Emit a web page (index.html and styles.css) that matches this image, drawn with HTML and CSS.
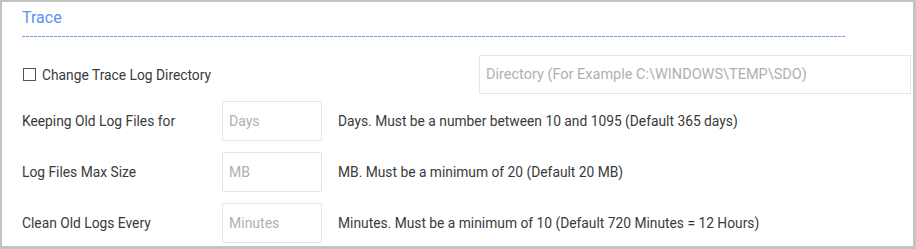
FILE: index.html
```html
<!DOCTYPE html>
<html lang="en">
<head>
  <meta charset="UTF-8" />
  <title>Trace</title>
  <link rel="stylesheet" href="styles.css">
</head>
<body>
  <div class="panel">
    <h2 class="title">Trace</h2>
    <div class="rule"></div>

    <div class="row dir-row">
      <label class="check">
        <span class="box"></span>
        Change Trace Log Directory
      </label>
      <input type="text" class="dir" placeholder="Directory (For Example C:\WINDOWS\TEMP\SDO)" />
    </div>

    <div class="row">
      <span class="label">Keeping Old Log Files for</span>
      <input type="text" class="small" placeholder="Days" />
      <span class="help">Days. Must be a number between 10 and 1095 (Default 365 days)</span>
    </div>

    <div class="row">
      <span class="label">Log Files Max Size</span>
      <input type="text" class="small" placeholder="MB" />
      <span class="help">MB. Must be a minimum of 20 (Default 20 MB)</span>
    </div>

    <div class="row">
      <span class="label">Clean Old Logs Every</span>
      <input type="text" class="small" placeholder="Minutes" />
      <span class="help">Minutes. Must be a minimum of 10 (Default 720 Minutes = 12 Hours)</span>
    </div>
  </div>
</body>
</html>
```

FILE: styles.css
```css
html, body {
  margin: 0;
  padding: 0;
  background: #fff;
}
body {
  font-family: Roboto, Arial, sans-serif;
  font-size: 13.8px;
  color: #3a3a3a;
}
.panel {
  box-sizing: border-box;
  width: 916px;
  height: 249px;
  border-style: solid;
  border-color: #c3c3c3;
  border-width: 2px 3px 3px 2px;
  padding: 8px 0 0 20px;
  overflow: hidden;
}
.title {
  margin: 0;
  font-size: 16px;
  font-weight: normal;
  color: #5f8ff2;
  line-height: 16px;
}
.rule {
  width: 823px;
  height: 1px;
  margin-top: 10px;
  background: repeating-linear-gradient(to right, #6f9be8 0 3px, transparent 3px 4px);
}
.row {
  display: flex;
  align-items: center;
  height: 40px;
  margin-top: 11px;
}
.dir-row {
  margin-top: 18px;
  height: 39px;
  margin-bottom: -4px;
}
.check {
  display: flex;
  align-items: center;
  gap: 6px;
  width: 456px;
  padding-left: 1px;
}
.box {
  box-sizing: border-box;
  width: 13px;
  height: 13px;
  border: 1px solid #555;
  background: #fff;
}
input {
  box-sizing: border-box;
  height: 100%;
  border: 1px solid #e6e6e6;
  padding: 0 6px;
  font-family: Roboto, Arial, sans-serif;
  font-size: 14px;
  color: #333;
  outline: none;
}
input::placeholder {
  color: #b0b0b0;
}
.dir {
  width: 432px;
  padding-left: 6px;
  font-size: 14.5px;
}
.label {
  width: 200px;
}
.small {
  width: 100px;
}
.help {
  margin-left: 16px;
}
```
